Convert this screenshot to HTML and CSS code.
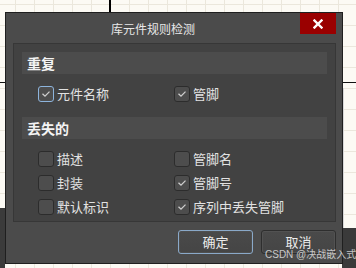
FILE: index.html
```html
<!DOCTYPE html>
<html lang="zh">
<head>
<meta charset="utf-8">
<title>库元件规则检测</title>
<link rel="stylesheet" href="styles.css">
</head>
<body>
<div class="dialog">
  <div class="titlebar">
    <div class="title">库元件规则检测</div>
    <button class="close" aria-label="关闭">
      <svg width="10" height="10" viewBox="0 0 10 10"><path d="M1.5 1.5 L8.5 8.5 M8.5 1.5 L1.5 8.5" stroke="#fff" stroke-width="2.4" stroke-linecap="square"/></svg>
    </button>
  </div>
  <div class="panel">
    <div class="group">
      <div class="group-head">重复</div>
      <div class="rows">
        <label class="item"><span class="cb checked focus"><svg width="16" height="16" viewBox="0 0 16 16"><path d="M4.5 7.8 L7 10.2 L11.5 5.6" fill="none" stroke="#cfcfcf" stroke-width="1.3"/></svg></span>元件名称</label>
        <label class="item"><span class="cb checked"><svg width="16" height="16" viewBox="0 0 16 16"><path d="M4.5 7.8 L7 10.2 L11.5 5.6" fill="none" stroke="#cfcfcf" stroke-width="1.3"/></svg></span>管脚</label>
      </div>
    </div>
    <div class="group">
      <div class="group-head">丢失的</div>
      <div class="rows">
        <label class="item"><span class="cb"></span>描述</label>
        <label class="item"><span class="cb"></span>管脚名</label>
        <label class="item"><span class="cb"></span>封装</label>
        <label class="item"><span class="cb checked"><svg width="16" height="16" viewBox="0 0 16 16"><path d="M4.5 7.8 L7 10.2 L11.5 5.6" fill="none" stroke="#cfcfcf" stroke-width="1.3"/></svg></span>管脚号</label>
        <label class="item"><span class="cb"></span>默认标识</label>
        <label class="item"><span class="cb checked"><svg width="16" height="16" viewBox="0 0 16 16"><path d="M4.5 7.8 L7 10.2 L11.5 5.6" fill="none" stroke="#cfcfcf" stroke-width="1.3"/></svg></span>序列中丢失管脚</label>
      </div>
    </div>
  </div>
  <div class="footer">
    <button class="btn primary">确定</button>
    <button class="btn">取消</button>
  </div>
</div>
<div class="watermark">CSDN @决战嵌入式</div>
</body>
</html>
```
FILE: styles.css
```css
* { box-sizing: border-box; }
html, body { margin: 0; padding: 0; }
body {
  width: 356px;
  height: 268px;
  overflow: hidden;
  position: relative;
  font-family: "Noto Sans CJK SC", "Noto Sans", sans-serif;
  background-color: #fcfaf4;
  background-image:
    linear-gradient(#000, #000),
    linear-gradient(#111, #111),
    linear-gradient(#3b3b3b, #3b3b3b),
    linear-gradient(#3a3a3a, #3a3a3a),
    linear-gradient(#d8d8d8, #d8d8d8),
    linear-gradient(to right, #ebe7dc 1px, transparent 1px),
    linear-gradient(to bottom, #ebe7dc 1px, transparent 1px);
  background-repeat: no-repeat, no-repeat, no-repeat, no-repeat, no-repeat, repeat, repeat;
  background-size: 2px 12px, 356px 1px, 5px 60px, 14px 40px, 1px 140px, 19px 21px, 19px 21px;
  background-position: 109px 0, 0 82px, 0 208px, 342px 228px, 343px 88px, 15px 0, 0 4px;
}
.dialog {
  margin: 12px 0 0 5px;
  width: 338px;
  height: 252px;
  border: 1px solid #1f1f1f;
  background: #4b4b4b;
  display: flex;
  flex-direction: column;
}
.titlebar {
  height: 30px;
  display: flex;
  align-items: flex-start;
  padding-right: 6px;
}
.title {
  flex: 1;
  height: 30px;
  line-height: 31px;
  text-align: center;
  color: #e8e8e8;
  font-size: 12px;
}
.close {
  width: 36px;
  height: 21px;
  border: 0;
  padding: 0;
  margin: 0;
  background: #9a0000;
  display: flex;
  align-items: center;
  justify-content: center;
}
.panel {
  margin: 0 6px 0 7px;
  border: 1px solid #373737;
  background: #424242;
  padding: 8px 8px 2px 8px;
  display: flex;
  flex-direction: column;
  gap: 8px;
}
.group-head {
  height: 22px;
  line-height: 22px;
  background: #4c4c4c;
  color: #f4f4f4;
  font-weight: bold;
  font-size: 14px;
  padding-left: 5px;
}
.rows {
  display: grid;
  grid-template-columns: 136px 1fr;
  grid-auto-rows: 24px;
  padding: 8px 0 3px 16px;
}
.group:last-child .rows { padding-bottom: 0; }
.item {
  display: flex;
  align-items: center;
  color: #e2e2e2;
  font-size: 13px;
  line-height: 16px;
}
.cb {
  width: 16px;
  height: 16px;
  border: 1px solid #2c2c2c;
  border-radius: 3px;
  background: #4d4d4d;
  margin-right: 3px;
  position: relative;
  flex: none;
}
.cb svg {
  position: absolute;
  left: -1px;
  top: -1px;
}
.cb.focus {
  border-color: #8db4dc;
}
.footer {
  display: flex;
  justify-content: flex-end;
  gap: 8px;
  padding: 8px 6px 0 0;
}
.btn {
  width: 75px;
  height: 24px;
  padding: 0;
  border: 1px solid #2e2e2e;
  border-radius: 3px;
  background: linear-gradient(#4a4a4a, #454545);
  box-shadow: inset 0 0 0 1px #525252;
  color: #ececec;
  font-family: "Noto Sans CJK SC", "Noto Sans", sans-serif;
  font-size: 13px;
  line-height: 22px;
}
.btn.primary {
  border-color: #8aa9c9;
  box-shadow: inset 0 0 0 1px #4f4f4f;
}
.watermark {
  position: absolute;
  left: 265px;
  top: 248px;
  font-size: 10px;
  line-height: 14px;
  color: rgba(225, 225, 225, 0.85);
  font-family: "Liberation Sans", "Noto Sans CJK SC", sans-serif;
  white-space: nowrap;
}
```
